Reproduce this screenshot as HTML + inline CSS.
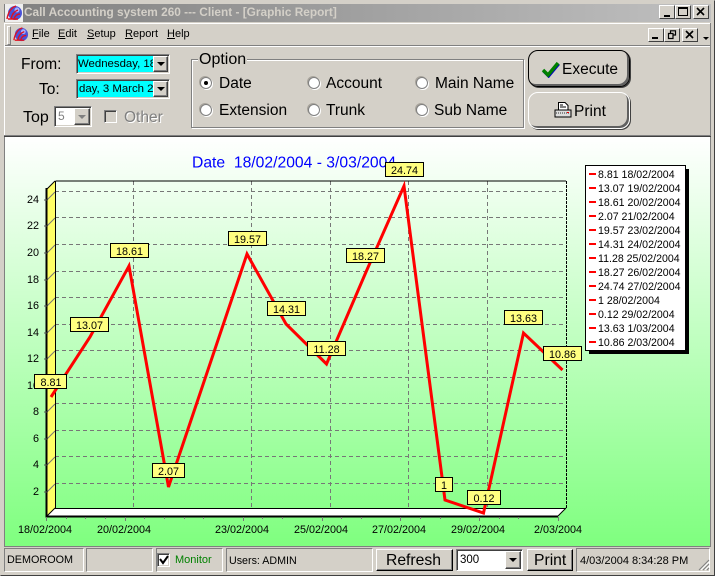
<!DOCTYPE html>
<html><head><meta charset="utf-8"><style>
html,body{margin:0;padding:0;background:#d4d0c8}
body{width:715px;height:576px;position:relative;overflow:hidden;font-family:"Liberation Sans",sans-serif;color:#000}
.a{position:absolute;white-space:nowrap}
.sunk{position:absolute;box-sizing:border-box;border:1px solid;border-color:#808080 #fff #fff #808080;box-shadow:inset 1px 1px 0 #404040,inset -1px -1px 0 #d4d0c8}
.pan{position:absolute;box-sizing:border-box;border:1px solid;border-color:#808080 #fff #fff #808080;height:24px;top:548px}
.btn{position:absolute;box-sizing:border-box;background:#d4d0c8;border:1px solid;border-color:#fff #404040 #404040 #fff;box-shadow:inset -1px -1px 0 #808080}
.ar{position:absolute;width:0;height:0;border-left:4px solid transparent;border-right:4px solid transparent;border-top:4px solid #000}
.t{font-size:15.5px;line-height:18px}
.rad{position:absolute;width:12px;height:12px;box-sizing:border-box;border-radius:50%;background:#fff;border:1px solid #808080;box-shadow:-1px -1px 0 #a8a49c,1px 1px 0 #fff}
.m{top:27px;font-size:11px;line-height:14px}
.m u{text-decoration:underline}
.wb{position:absolute;box-sizing:border-box;width:16px;height:14px;background:#d4d0c8;border:1px solid;border-color:#fff #404040 #404040 #fff}
</style></head><body>
<div class="a" style="left:0;top:0;width:715px;height:576px;box-sizing:border-box;border:1px solid;border-color:#d4d0c8 #404040 #404040 #d4d0c8"></div>
<div class="a" style="left:4px;top:4px;width:707px;height:18px;background:linear-gradient(90deg,#808080,#c0c0c0)"></div>
<svg class="a" style="left:5px;top:4px" width="18" height="18" viewBox="0 0 18 18"><rect width="18" height="18" fill="#eee"/><circle cx="10" cy="9" r="7" fill="#4a52d8"/><circle cx="12" cy="6" r="2.5" fill="#a8b0ff"/><path d="M2 15C3 8 7 3 11 2M6 15C7 10 10 7 13 6M9 15C10 12 12 10 15 10M3 15H13" stroke="#e01020" stroke-width="1.4" fill="none"/></svg>
<div class="a" style="left:24px;top:5px;font-size:11.85px;line-height:15px;font-weight:bold;color:#d4d0c8">Call Accounting system 260 --- Client - [Graphic Report]</div>
<div class="wb" style="left:659px;top:5px"></div><div class="a" style="left:664px;top:15px;width:6px;height:2px;background:#000"></div>
<div class="wb" style="left:675px;top:5px"></div><div class="a" style="left:678px;top:7px;width:10px;height:9px;box-sizing:border-box;border:1px solid #000;border-top-width:2px"></div>
<div class="wb" style="left:693px;top:5px"></div><svg class="a" style="left:696px;top:7px" width="10" height="10"><path d="M1 1L8 8M8 1L1 8" stroke="#000" stroke-width="1.6"/></svg>
<div class="a" style="left:4px;top:23px;width:707px;height:1px;background:#fff"></div>
<div class="a" style="left:4px;top:45px;width:707px;height:1px;background:#808080"></div>
<div class="a" style="left:4px;top:46px;width:707px;height:1px;background:#fff"></div>
<div class="a" style="left:4px;top:23px;width:1px;height:113px;background:#fff"></div>
<div class="a" style="left:710px;top:23px;width:1px;height:113px;background:#808080"></div>
<div class="a" style="left:7px;top:26px;width:2px;height:17px;border:1px solid;border-color:#fff #808080 #808080 #fff"></div>
<svg class="a" style="left:12px;top:26px" width="17" height="17" viewBox="0 0 18 18"><circle cx="10" cy="9" r="7" fill="#4a52d8"/><circle cx="12" cy="6" r="2.5" fill="#a8b0ff"/><path d="M2 15C3 8 7 3 11 2M6 15C7 10 10 7 13 6M9 15C10 12 12 10 15 10M3 15H13" stroke="#e01020" stroke-width="1.4" fill="none"/></svg>
<div class="a m" style="left:32px"><u>F</u>ile</div>
<div class="a m" style="left:58px"><u>E</u>dit</div>
<div class="a m" style="left:87px"><u>S</u>etup</div>
<div class="a m" style="left:125px"><u>R</u>eport</div>
<div class="a m" style="left:167px"><u>H</u>elp</div>
<div class="wb" style="left:648px;top:28px"></div><div class="a" style="left:652px;top:37px;width:6px;height:2px;background:#000"></div>
<div class="wb" style="left:664px;top:28px"></div><svg class="a" style="left:667px;top:30px" width="10" height="10"><path d="M3.5 3V.8H8.5V5H6.5M1.5 3.5H6V8.5H1.5Z" stroke="#000" stroke-width="1.2" fill="none"/></svg>
<div class="wb" style="left:682px;top:28px"></div><svg class="a" style="left:685px;top:30px" width="10" height="10"><path d="M1 1L8 8M8 1L1 8" stroke="#000" stroke-width="1.6"/></svg>
<div class="ar" style="left:703px;top:37px;border-left-width:3px;border-right-width:3px;border-top-width:3px"></div>

<div class="a t" style="left:21px;top:56px">From:</div>
<div class="a t" style="left:39px;top:81px">To:</div>
<div class="a t" style="left:23px;top:109px;font-size:16px">Top</div>
<div class="sunk" style="left:76px;top:54px;width:94px;height:20px;background:#0ff"></div>
<div class="a" style="left:78px;top:56px;width:75px;overflow:hidden;font-size:11.4px;line-height:16px;color:#000">Wednesday, 18 F</div>
<div class="btn" style="left:153px;top:56px;width:15px;height:16px"></div><div class="ar" style="left:157px;top:62px"></div>
<div class="sunk" style="left:76px;top:79px;width:94px;height:20px;background:#0ff"></div>
<div class="a" style="left:79px;top:81px;width:74px;overflow:hidden;font-size:11.4px;line-height:16px">day, 3 March 2004</div>
<div class="btn" style="left:153px;top:81px;width:15px;height:16px"></div><div class="ar" style="left:157px;top:87px"></div>
<div class="sunk" style="left:54px;top:106px;width:38px;height:21px;background:#fff"></div>
<div class="a" style="left:58px;top:108px;font-size:12px;line-height:16px;color:#808080">5</div>
<div class="btn" style="left:74px;top:108px;width:16px;height:17px"></div><div class="ar" style="left:78px;top:115px;border-top-color:#808080"></div>
<div class="sunk" style="left:104px;top:110px;width:13px;height:13px;box-shadow:inset 1px 1px 0 #404040"></div>
<div class="a" style="left:124px;top:109px;font-size:15.5px;line-height:18px;color:#808080;text-shadow:1px 1px 0 #fff">Other</div>

<div class="a" style="left:191px;top:59px;width:333px;height:69px;box-sizing:border-box;border:1px solid #808080;box-shadow:1px 1px 0 #fff,inset 1px 1px 0 #fff"></div>
<div class="a" style="left:198px;top:51px;background:#d4d0c8;padding:0 1px;font-size:16px;line-height:17px">Option</div>
<div class="rad" style="left:200px;top:77px"></div><div class="a" style="left:204px;top:81px;width:4px;height:4px;border-radius:50%;background:#000"></div>
<div class="a t" style="left:219px;top:75px">Date</div>
<div class="rad" style="left:308px;top:77px"></div><div class="a t" style="left:326px;top:75px">Account</div>
<div class="rad" style="left:416px;top:77px"></div><div class="a t" style="left:435px;top:75px">Main Name</div>
<div class="rad" style="left:200px;top:104px"></div><div class="a t" style="left:219px;top:102px">Extension</div>
<div class="rad" style="left:308px;top:104px"></div><div class="a t" style="left:326px;top:102px">Trunk</div>
<div class="rad" style="left:416px;top:104px"></div><div class="a t" style="left:434px;top:102px">Sub Name</div>

<div class="a" style="left:528px;top:50px;width:102px;height:37px;box-sizing:border-box;border:1px solid #000;border-radius:10px;box-shadow:inset -2px -2px 0 #606060,1px 1px 0 #404040"></div>
<svg class="a" style="left:541px;top:60px" width="20" height="18"><path d="M2 10L7 15L17 3" stroke="#0000c0" stroke-width="3.4" fill="none" transform="translate(.6 .8)"/><path d="M2 10L7 15L17 3" stroke="#008000" stroke-width="3.4" fill="none"/></svg>
<div class="a" style="left:562px;top:61px;font-size:15.5px;line-height:18px">Execute</div>
<div class="a" style="left:528px;top:92px;width:102px;height:37px;box-sizing:border-box;border:1px solid #fff;border-radius:10px;box-shadow:inset -2px -2px 0 #606060,1px 1px 0 #404040"></div>
<svg class="a" style="left:554px;top:102px" width="18" height="17"><path d="M4.5 .5H11L14 3.5V8H4.5Z" fill="#fff" stroke="#000"/><path d="M6 3H9M6 5H12" stroke="#000"/><path d="M1 8H17V15H1Z" fill="#ddd" stroke="#000"/><path d="M2 11H16" stroke="#888" stroke-dasharray="1 1" stroke-width="2"/><rect x="13" y="10" width="2" height="1" fill="#e00"/></svg>
<div class="a" style="left:574px;top:103px;font-size:15.5px;line-height:18px">Print</div>

<div class="a" style="left:4px;top:135px;width:707px;height:1px;background:#808080"></div>
<div class="a" style="left:4px;top:136px;width:707px;height:1px;background:#404040"></div>
<div class="a" style="left:4px;top:137px;width:1px;height:409px;background:#808080"></div>
<div class="a" style="left:710px;top:137px;width:1px;height:409px;background:#808080"></div>

<svg class="a" style="left:5px;top:137px" width="705" height="409"><defs><linearGradient id="g" x1="0" y1="0" x2="0" y2="1"><stop offset="0" stop-color="#fff"/><stop offset="1" stop-color="#7fff7f"/></linearGradient></defs><rect width="705" height="409" fill="url(#g)"/></svg>

<svg class="a" style="left:0;top:0" width="715" height="576" font-family="Liberation Sans, sans-serif" font-size="10.8">
<text x="192" y="167.500" font-size="15.700" fill="#0000ff" xml:space="preserve">Date  18/02/2004 - 3/03/2004</text>
<path d="M47 189L55 181V508L47 516Z" fill="#ffff66"/>
<path d="M47 516L55 508H566L558 516Z" fill="#fff"/>
<g stroke="#777" stroke-dasharray="4 3" fill="none">
<path d="M55 191.500H566M55 217.500H566M55 244.500H566M55 271.500H566M55 297.500H566M55 324.500H566M55 350.500H566M55 377.500H566M55 403.500H566M55 430.500H566M55 456.500H566M55 483.500H566"/>
<path d="M133.500 181V508M251.500 181V508M330.500 181V508M408.500 181V508M487.500 181V508"/>
<path d="M47 200L55 192M47 226L55 218M47 253L55 245M47 280L55 272M47 306L55 298M47 333L55 325M47 359L55 351M47 386L55 378M47 412L55 404M47 439L55 431M47 465L55 457M47 492L55 484" stroke-dasharray="none"/>
</g>
<path d="M55.500 181H566M55.500 181V508.500H566" stroke="#000" fill="none" stroke-width="1"/>
<path d="M566.500 181V508" stroke="#000" stroke-dasharray="3 1" fill="none"/>
<path d="M47 189L55 181M47 516L55 508M558 516L566 508" stroke="#000" fill="none"/>
<path d="M46.500 188V516.500H558" stroke="#000" stroke-width="2" fill="none"/>
<path d="M44 200H47M44 226H47M44 253H47M44 280H47M44 306H47M44 333H47M44 359H47M44 386H47M44 412H47M44 439H47M44 465H47M44 492H47" stroke="#555"/>
<path d="M46.500 517V521M66.500 517V519M85.500 517V519M105.500 517V519M125.500 517V521M144.500 517V519M164.500 517V519M184.500 517V519M203.500 517V519M243.500 517V521M262.500 517V519M282.500 517V519M322.500 517V521M341.500 517V519M361.500 517V519M400.500 517V521M420.500 517V519M440.500 517V519M479.500 517V521M499.500 517V519M518.500 517V519M558.500 517V521" stroke="#777"/>
<g text-anchor="end">
<text x="39" y="203">24</text><text x="39" y="229">22</text><text x="39" y="256">20</text><text x="39" y="283">18</text><text x="39" y="309">16</text><text x="39" y="336">14</text><text x="39" y="362">12</text><text x="39" y="389">10</text><text x="39" y="415">8</text><text x="39" y="442">6</text><text x="39" y="468">4</text><text x="39" y="495">2</text>
</g>
<g>
<text x="18" y="533">18/02/2004</text><text x="97" y="533">20/02/2004</text><text x="215" y="533">23/02/2004</text><text x="294" y="533">25/02/2004</text><text x="372" y="533">27/02/2004</text><text x="451" y="533">29/02/2004</text><text x="534" y="533">2/03/2004</text>
</g>
<polyline points="51,397 90,337 129,266 168.500,487 247,254 286,324 326.500,364 366,272 404,186 445,500 483.500,513 523.500,333 562.500,370" fill="none" stroke="#ff0000" stroke-width="3"/>
<g fill="#ffff80" stroke="#000">
<rect x="34.500" y="374.500" width="32" height="14"/><rect x="70.500" y="317.500" width="38" height="14"/><rect x="110.500" y="243.500" width="38" height="14"/><rect x="152.500" y="463.500" width="32" height="14"/><rect x="228.500" y="231.500" width="38" height="14"/><rect x="267.500" y="301.500" width="38" height="14"/><rect x="307.500" y="341.500" width="38" height="14"/><rect x="346.500" y="248.500" width="38" height="14"/><rect x="385.500" y="162.500" width="38" height="14"/><rect x="435.500" y="477.500" width="17" height="14"/><rect x="467.500" y="490.500" width="33" height="14"/><rect x="504.500" y="310.500" width="38" height="14"/><rect x="543.500" y="346.500" width="38" height="14"/>
</g>
<g text-anchor="middle">
<text x="51" y="386">8.81</text><text x="89.500" y="329">13.07</text><text x="129.500" y="255">18.61</text><text x="168.500" y="475">2.07</text><text x="247.500" y="243">19.57</text><text x="286.500" y="313">14.31</text><text x="326.500" y="353">11.28</text><text x="365.500" y="260">18.27</text><text x="404.500" y="174">24.74</text><text x="444" y="489">1</text><text x="484" y="502">0.12</text><text x="523.500" y="322">13.63</text><text x="562.500" y="358">10.86</text>
</g>
<rect x="589" y="169" width="100" height="185" fill="#000"/>
<rect x="585.500" y="165.500" width="100" height="185" fill="#fff" stroke="#000"/>
<g fill="#ff0000">
<rect x="589" y="173" width="7" height="2"/><rect x="589" y="187" width="7" height="2"/><rect x="589" y="201" width="7" height="2"/><rect x="589" y="215" width="7" height="2"/><rect x="589" y="229" width="7" height="2"/><rect x="589" y="243" width="7" height="2"/><rect x="589" y="257" width="7" height="2"/><rect x="589" y="271" width="7" height="2"/><rect x="589" y="285" width="7" height="2"/><rect x="589" y="299" width="7" height="2"/><rect x="589" y="313" width="7" height="2"/><rect x="589" y="327" width="7" height="2"/><rect x="589" y="341" width="7" height="2"/>
</g>
<g font-size="10.600">
<text x="598" y="178">8.81 18/02/2004</text><text x="598" y="192">13.07 19/02/2004</text><text x="598" y="206">18.61 20/02/2004</text><text x="598" y="220">2.07 21/02/2004</text><text x="598" y="234">19.57 23/02/2004</text><text x="598" y="248">14.31 24/02/2004</text><text x="598" y="262">11.28 25/02/2004</text><text x="598" y="276">18.27 26/02/2004</text><text x="598" y="290">24.74 27/02/2004</text><text x="598" y="304">1 28/02/2004</text><text x="598" y="318">0.12 29/02/2004</text><text x="598" y="332">13.63 1/03/2004</text><text x="598" y="346">10.86 2/03/2004</text>
</g>
</svg>

<div class="a" style="left:4px;top:546px;width:707px;height:1px;background:#808080"></div>
<div class="pan" style="left:4px;width:80px"></div>
<div class="a" style="left:7px;top:553px;font-size:10.8px;line-height:15px">DEMOROOM</div>
<div class="pan" style="left:86px;width:67px"></div>
<div class="pan" style="left:156px;width:67px"></div>
<div class="sunk" style="left:157px;top:553px;width:13px;height:14px;background:#fff"></div>
<svg class="a" style="left:158px;top:554px" width="12" height="12"><path d="M2 5L5 9L10 2" stroke="#000" stroke-width="2" fill="none"/></svg>
<div class="a" style="left:175px;top:553px;font-size:11px;line-height:14px;color:#008000">Monitor</div>
<div class="pan" style="left:226px;width:147px"></div>
<div class="a" style="left:229px;top:554px;font-size:10.7px;line-height:14px">Users: ADMIN</div>
<div class="btn" style="left:376px;top:549px;width:77px;height:22px;border-color:#fff #000 #000 #fff"></div>
<div class="a" style="left:386px;top:552px;font-size:15.7px;line-height:18px">Refresh</div>
<div class="sunk" style="left:456px;top:549px;width:67px;height:22px;background:#fff;box-shadow:inset 1px 1px 0 #404040"></div>
<div class="a" style="left:460px;top:552px;font-size:11.5px;line-height:16px">300</div>
<div class="btn" style="left:505px;top:551px;width:16px;height:18px"></div><div class="ar" style="left:509px;top:558px"></div>
<div class="btn" style="left:527px;top:549px;width:46px;height:22px;border-color:#fff #000 #000 #fff"></div>
<div class="a" style="left:534px;top:552px;font-size:15.7px;line-height:18px">Print</div>
<div class="pan" style="left:576px;width:134px"></div>
<div class="a" style="left:580px;top:554px;font-size:11px;line-height:14px">4/03/2004 8:34:28 PM</div>
<svg class="a" style="left:698px;top:559px" width="12" height="12"><path d="M11 1L1 11M11 5L5 11M11 9L9 11" stroke="#808080"/><path d="M11 3L3 11M11 7L7 11" stroke="#fff"/></svg>
</body></html>
